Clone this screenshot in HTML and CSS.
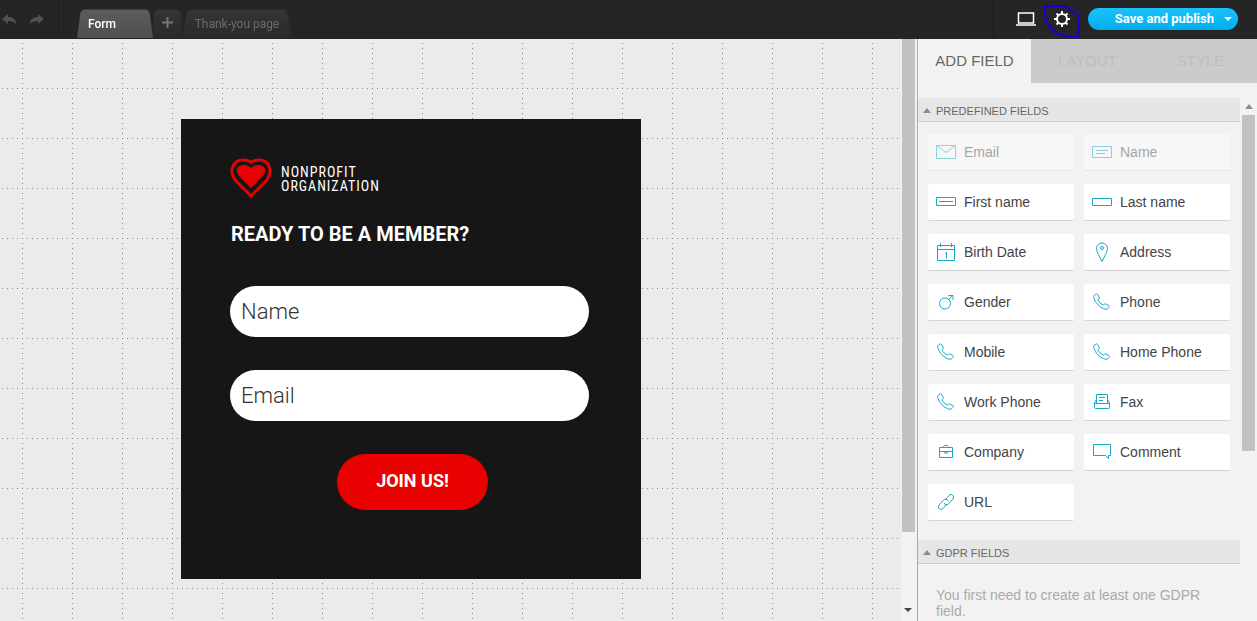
FILE: index.html
```html
<!DOCTYPE html>
<html lang="en">

<head>
  <meta charset="utf-8">
  <meta name="viewport" content="width=device-width, initial-scale=1.0">
  <title>Form editor</title>
  <link rel="stylesheet" href="styles.css">
</head>

<body>

<!-- icon set -->
<svg class="icon_set" aria-hidden="true">
  <symbol id="i_email" viewBox="0 0 20 20"><path d="M.5 3.500h19v13H.5zM.5 3.500l9.500 7 9.500-7"/></symbol>
  <symbol id="i_name" viewBox="0 0 20 20"><path d="M.5 4.500h19v11H.5zM4 8.500h12M4 11.500h9"/></symbol>
  <symbol id="i_first" viewBox="0 0 20 20"><path d="M.5 5.500h19v8H.5zM3 9.500h14"/></symbol>
  <symbol id="i_last" viewBox="0 0 20 20"><path d="M.5 6.500h19v7H.5z"/></symbol>
  <symbol id="i_date" viewBox="0 0 20 20"><path d="M1.500 3.500h17v15h-17zM1.500 7.500h17M4.500 1v4M15.500 1v4M9 11.500l1.500-1v6"/></symbol>
  <symbol id="i_address" viewBox="0 0 20 20"><path d="M10 19.500C8 15 4.500 10 4.500 6.500a5.500 5.500 0 0 1 11 0C15.500 10 12 15 10 19.500z"/><circle cx="10" cy="6" r="1.500"/></symbol>
  <symbol id="i_gender" viewBox="0 0 20 20"><circle cx="9" cy="11.500" r="5.500"/><path d="M13 7.500l3.500-4M12.500 3.500h4.500v4.500"/></symbol>
  <symbol id="i_phone" viewBox="0 0 20 20"><path d="M2.500 3l1.500-1c.6-.4 1.200-.2 1.500.4l1.800 3c.3.6.1 1-.4 1.400l-1 .9c.8 2.400 2.900 4.400 5.800 5.300l.9-.8c.4-.4.9-.5 1.400-.2l3 1.700c.6.4.6 1 .2 1.500l-1.200 1.300c-1 1-2.600.8-4.500.1C7.500 15.100 3.500 11 2 6.500 1.500 5 1.500 3.800 2.500 3z"/></symbol>
  <symbol id="i_fax" viewBox="0 0 20 20"><path d="M4.500 11V2.500h11V11M7 5.500h6M7 8.500h4M4.500 8.500h-1l-1 2.500v4.500q0 1 1 1h13q1 0 1-1V11l-1-2.500h-1M2.500 11.500h15"/></symbol>
  <symbol id="i_company" viewBox="0 0 20 20"><path d="M3.500 5.500h13v10h-13zM3.500 9.500h5M11.500 9.500h5M8.500 9.500h3v1.500h-3zM7.500 5.500v-1l1-1h3l1 1v1"/></symbol>
  <symbol id="i_comment" viewBox="0 0 20 20"><path d="M1.500 2.500h17v11h-2v3l-3-3h-12z"/></symbol>
  <symbol id="i_url" viewBox="0 0 20 20"><path d="M9 8l4-4.500c2.500-2.500 6 .5 4 3.500l-4.500 5c-1.500 1.500-4 1-4.500-1M11 12l-4 4.500c-2.500 2.500-6-.5-4-3.500l4.500-5c1.500-1.500 4-1 4.500 1"/></symbol>
</svg>

<header id="top_bar">
  <div class="history">
    <button type="button" aria-label="Undo"><svg width="16" height="12" viewBox="0 0 16 12"><path d="M1 5l6-5v3c5 0 8 2 8 7-2-2-4-3-8-3v3z"/></svg></button>
    <button type="button" aria-label="Redo"><svg width="16" height="12" viewBox="0 0 16 12"><path d="M15 5L9 0v3C4 3 1 5 1 10c2-2 4-3 8-3v3z"/></svg></button>
  </div>

  <nav class="page_tabs">
    <button type="button" class="page_tab form_tab">Form</button>
    <button type="button" class="page_tab plus_tab" aria-label="Add page"><svg width="11" height="11" viewBox="0 0 11 11"><path d="M5.500 0v11M0 5.500h11"/></svg></button>
    <button type="button" class="page_tab thanks_tab">Thank-you page</button>
  </nav>

  <div class="actions">
    <button type="button" class="tool" aria-label="Preview">
      <svg width="20" height="14" viewBox="0 0 20 14"><path d="M2.500 1h15v10h-15zM0 13h20" fill="none" stroke="#fff" stroke-width="1.500"/></svg>
    </button>
    <button type="button" class="tool gear" aria-label="Settings">
      <svg width="16" height="16" viewBox="0 0 16 16"><circle cx="8" cy="8" r="5" fill="none" stroke="#fff" stroke-width="2"/><path d="M8 0v3M8 13v3M0 8h3M13 8h3M2.500 2.500l2 2M11.500 11.500l2 2M2.500 13.500l2-2M11.500 4.500l2-2" stroke="#fff" stroke-width="2"/></svg>
      <svg class="pen_mark" width="40" height="34" viewBox="0 0 40 34"><path d="M2 2l10-1h12l2 3 7 3 3 4 1 10-1 11-9 0-13-4-8-8-3-10z"/></svg>
    </button>
    <button type="button" class="publish">Save and publish <span class="caret"></span></button>
  </div>
</header>

<main id="editor">
  <section class="canvas">
    <form class="form_card">
      <div class="logo">
        <svg width="42" height="42" viewBox="0 0 42 42"><path d="M21 39L6 24C-2 14 3 3 13 3c3 0 6 1 8 2 2-1 5-2 8-2 10 0 15 11 7 21z" fill="none" stroke="#e90000" stroke-width="3"/><path d="M21 31L10 20C4 14 7 8 14 8c3 0 5 1 7 3 2-2 4-3 7-3 7 0 10 6 4 12z" fill="#e90000"/></svg>
        <span>NONPROFIT<br>ORGANIZATION</span>
      </div>
      <h1>READY TO BE A MEMBER?</h1>
      <input type="text" placeholder="Name" aria-label="Name">
      <input type="email" placeholder="Email" aria-label="Email">
      <button type="button">JOIN US!</button>
    </form>
  </section>

  <div class="canvas_scroll"><div class="thumb"></div><span class="arrow_down"></span></div>

  <aside id="sidebar">
    <nav class="side_tabs">
      <button type="button" class="selected">ADD FIELD</button>
      <button type="button">LAYOUT</button>
      <button type="button">STYLE</button>
    </nav>

    <div class="side_body">
      <div class="side_list">
        <h2><span class="arrow_up"></span>PREDEFINED FIELDS</h2>
        <div class="fields">
          <button type="button" disabled><svg><use href="#i_email"/></svg>Email</button>
          <button type="button" disabled><svg><use href="#i_name"/></svg>Name</button>
          <button type="button"><svg><use href="#i_first"/></svg>First name</button>
          <button type="button"><svg><use href="#i_last"/></svg>Last name</button>
          <button type="button"><svg><use href="#i_date"/></svg>Birth Date</button>
          <button type="button"><svg><use href="#i_address"/></svg>Address</button>
          <button type="button"><svg><use href="#i_gender"/></svg>Gender</button>
          <button type="button"><svg><use href="#i_phone"/></svg>Phone</button>
          <button type="button"><svg><use href="#i_phone"/></svg>Mobile</button>
          <button type="button"><svg><use href="#i_phone"/></svg>Home Phone</button>
          <button type="button"><svg><use href="#i_phone"/></svg>Work Phone</button>
          <button type="button"><svg><use href="#i_fax"/></svg>Fax</button>
          <button type="button"><svg><use href="#i_company"/></svg>Company</button>
          <button type="button"><svg><use href="#i_comment"/></svg>Comment</button>
          <button type="button"><svg><use href="#i_url"/></svg>URL</button>
        </div>
        <h2><span class="arrow_up"></span>GDPR FIELDS</h2>
        <p>You first need to create at least one GDPR field.</p>
      </div>
      <div class="side_scroll"><span class="arrow_up"></span><div class="thumb"></div></div>
    </div>
  </aside>
</main>

</body>

</html>
```
FILE: styles.css
```css
* {
  box-sizing: border-box;
}
html, body {
  height: 100%;
}
body {
  margin: 0;
  display: flex;
  flex-direction: column;
  overflow: hidden;
  font-family: "Liberation Sans", Arial, sans-serif;
}
button {
  border: none;
  padding: 0;
  background: none;
  font-family: inherit;
}
.icon_set {
  display: none;
}

/* top bar */
#top_bar {
  display: flex;
  flex: none;
  height: 39px;
  background-color: #252525;
  font-family: Roboto, sans-serif;
}
.history {
  display: flex;
  align-items: center;
  gap: 12px;
  width: 59px;
  padding-left: 1px;
  border-right: 1px solid #1e1e1e;
}
.history button {
  height: 12px;
}
.history svg {
  display: block;
  fill: #505050;
}
.page_tabs {
  display: flex;
  align-items: flex-end;
  flex: 1;
  padding: 0 0 1px 18px;
}
.page_tab {
  position: relative;
  z-index: 0;
  height: 28px;
  font-size: 12px;
  color: #6c6c6c;
}
/* the sloped tab shape sits behind the label */
.page_tab::before {
  content: "";
  position: absolute;
  inset: -4px 0 0;
  z-index: -1;
  border-radius: 5px 5px 0 0;
  background: linear-gradient(#353535, #2a2a2a);
  transform: perspective(40px) rotateX(8deg);
  transform-origin: bottom;
}
.form_tab {
  width: 76px;
  padding-left: 11px;
  text-align: left;
  color: #fff;
  font-weight: 500;
}
.form_tab::before {
  background: linear-gradient(#5c5c5c, #505050);
}
.plus_tab {
  width: 29px;
}
.plus_tab svg {
  stroke: #777;
  stroke-width: 2;
}
.thanks_tab {
  width: 110px;
}
.actions {
  display: flex;
  align-items: center;
  width: 264px;
  padding: 0 0 2px 22px;
  border-left: 1px solid #1a1a1a;
}
.tool {
  position: relative;
}
.tool svg {
  display: block;
}
.gear {
  margin: 0 18px;
}
.tool .pen_mark {
  position: absolute;
  top: -6px;
  left: -12px;
  fill: none;
  stroke: #1400d2;
  stroke-width: 2;
}
.publish {
  display: flex;
  align-items: center;
  justify-content: flex-end;
  gap: 10px;
  width: 150px;
  height: 22px;
  padding-right: 6px;
  border-radius: 11px;
  background: linear-gradient(#1cc0fa, #00aeee);
  color: #fff;
  font-size: 13px;
  font-weight: bold;
}
.caret {
  border: 4px solid transparent;
  border-top-color: #fff;
  border-bottom: none;
}

/* editor */
#editor {
  display: flex;
  flex: 1;
  min-height: 0;
  background-color: #f2f2f2;
}
.canvas {
  flex: 1;
  padding: 80px 0 0 181px;
  overflow: hidden;
  background-color: #ebebeb;
  background-image:
    conic-gradient(from 270deg at 1px 1px, #8c8c8c 90deg, transparent 0),
    conic-gradient(from 270deg at 1px 1px, #8c8c8c 90deg, transparent 0);
  background-size: 50px 5px, 5px 50px;
  background-position: 22px 4px, 2px 49px;
}
.form_card {
  display: flex;
  flex-direction: column;
  width: 460px;
  height: 460px;
  padding: 38px 52px 0 49px;
  background-color: #161616;
  color: #fff;
  font-family: Roboto, sans-serif;
}
.logo {
  display: flex;
  align-items: center;
  gap: 9px;
  height: 42px;
  font-family: "Roboto Condensed", "Liberation Sans Narrow", Roboto, sans-serif;
  font-size: 14px;
  line-height: 14px;
  letter-spacing: 1px;
}
.logo span {
  padding-top: 2px;
}
.form_card h1 {
  margin: 22px 0 39px 1px;
  font-size: 20px;
  line-height: 26px;
  font-weight: bold;
}
.form_card input {
  width: 100%;
  height: 51px;
  margin-bottom: 33px;
  padding: 0 11px;
  border: none;
  border-radius: 26px;
  background-color: #fff;
  font-family: inherit;
  font-size: 22px;
  font-weight: 300;
}
.form_card input::placeholder {
  color: #333;
}
.form_card button {
  width: 151px;
  height: 56px;
  margin-left: 107px;
  padding-bottom: 4px;
  border-radius: 28px;
  background-color: #e90000;
  color: #fff;
  font-size: 18px;
  font-weight: bold;
}

/* scrollbars */
.canvas_scroll {
  display: flex;
  flex-direction: column;
  align-items: center;
  justify-content: space-between;
  width: 16px;
  padding: 0 2px 9px 0;
}
.thumb {
  width: 13px;
  background-color: #c1c1c1;
}
.canvas_scroll .thumb {
  height: 86%;
}
.arrow_down {
  border: 4px solid transparent;
  border-top-color: #444;
  border-bottom: none;
}
.arrow_up {
  border: 4px solid transparent;
  border-bottom: 5px solid #8c8c8c;
  border-top: none;
}

/* sidebar */
#sidebar {
  display: flex;
  flex-direction: column;
  width: 340px;
  border-left: 1px solid #aaa;
}
.side_tabs {
  display: flex;
  flex: none;
  height: 44px;
}
.side_tabs button {
  flex: 1;
  padding-bottom: 2px;
  background-color: #cbcbcb;
  color: #bebebe;
  font-size: 15px;
}
.side_tabs .selected {
  background-color: #f2f2f2;
  color: #666;
}
.side_body {
  display: flex;
  flex: 1;
  min-height: 0;
  padding-top: 15px;
}
.side_list {
  flex: 1;
  overflow: hidden;
}
.side_list h2 {
  display: flex;
  align-items: center;
  gap: 5px;
  height: 24px;
  margin: 0;
  padding: 2px 0 0 5px;
  border-bottom: 1px solid #ccc;
  background-color: #e6e6e6;
  color: #666;
  font-size: 11px;
  font-weight: normal;
}
.fields {
  display: grid;
  grid-template-columns: 1fr 1fr;
  gap: 13px 10px;
  padding: 12px 10px 19px;
}
.fields button {
  display: flex;
  align-items: center;
  gap: 8px;
  height: 37px;
  padding-left: 8px;
  border-bottom: 1px solid #d4d4d4;
  border-radius: 2px;
  background-color: #fff;
  color: #444;
  font-size: 14px;
}
.fields button:disabled {
  opacity: .45;
}
.fields svg {
  width: 20px;
  height: 20px;
  fill: none;
  stroke: #14a9c4;
}
.side_list p {
  margin: 23px 18px 0;
  color: #aaa;
  font-size: 14px;
  line-height: 16px;
}
.side_scroll {
  display: flex;
  flex-direction: column;
  align-items: center;
  gap: 6px;
  width: 17px;
  padding-top: 6px;
}
.side_scroll .thumb {
  height: 65%;
}
```
